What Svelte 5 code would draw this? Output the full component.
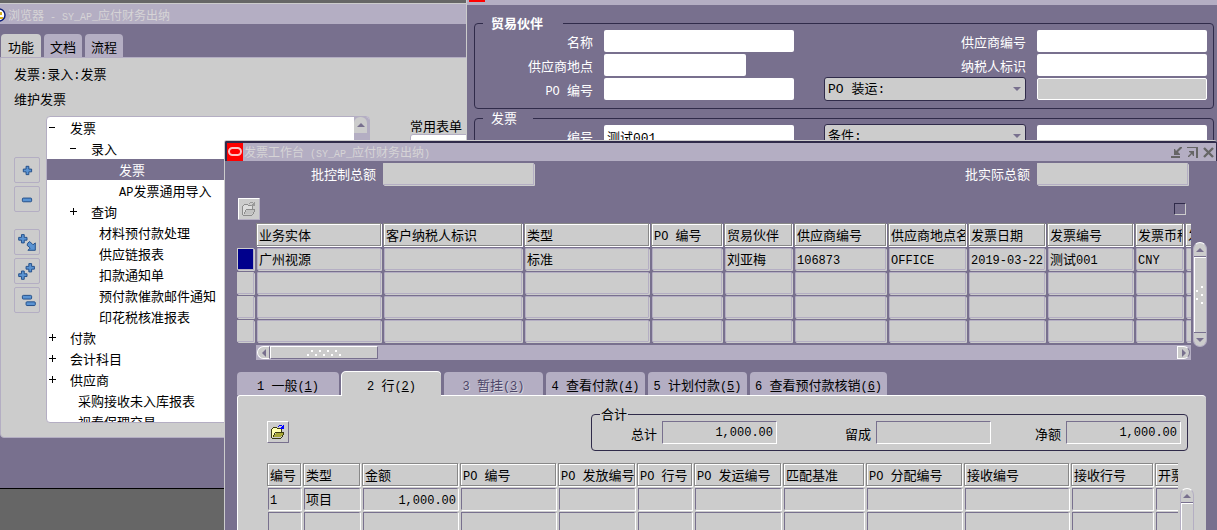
<script>
  const navTabs = ['功能', '文档', '流程'];

  const tree = [
    { level: 0, mark: '-', text: '发票' },
    { level: 1, mark: '-', text: '录入' },
    { level: 2, text: '发票', selected: true },
    { level: 2, text: 'AP发票通用导入' },
    { level: 1, mark: '+', text: '查询' },
    { level: 1, text: '材料预付款处理' },
    { level: 1, text: '供应链报表' },
    { level: 1, text: '扣款通知单' },
    { level: 1, text: '预付款催款邮件通知' },
    { level: 1, text: '印花税核准报表' },
    { level: 0, mark: '+', text: '付款' },
    { level: 0, mark: '+', text: '会计科目' },
    { level: 0, mark: '+', text: '供应商' },
    { level: 0, text: '采购接收未入库报表' },
    { level: 0, text: '视泰保理交易' }
  ];

  const tools = [
    { name: '展开', group: 0, plus: [[9, 9]], minus: [] },
    { name: '折叠', group: 0, plus: [], minus: [[8, 12]] },
    { name: '展开分支', group: 1, plus: [[4, 5]], minus: [], arrow: true },
    { name: '全部展开', group: 1, plus: [[12, 5], [4, 13]], minus: [] },
    { name: '全部折叠', group: 1, plus: [], minus: [[8, 8], [12, 15]] }
  ];

  const invoiceCols = [
    { w: 127, text: '业务实体' },
    { w: 141, text: '客户纳税人标识' },
    { w: 127, text: '类型' },
    { w: 73, text: 'PO 编号' },
    { w: 70, text: '贸易伙伴' },
    { w: 94, text: '供应商编号' },
    { w: 80, text: '供应商地点名' },
    { w: 79, text: '发票日期' },
    { w: 88, text: '发票编号' },
    { w: 50, text: '发票币种' },
    { w: 90, text: '发票金额' }
  ];
  const invoiceRows = [
    ['广州视源', '', '标准', '', '刘亚梅', '106873', 'OFFICE', '2019-03-22', '测试001', 'CNY', ''],
    Array(11).fill(''),
    Array(11).fill(''),
    Array(11).fill('')
  ];

  const workTabs = [
    { n: 1, text: '一般' },
    { n: 2, text: '行', active: true },
    { n: 3, text: '暂挂', off: true },
    { n: 4, text: '查看付款' },
    { n: 5, text: '计划付款' },
    { n: 6, text: '查看预付款核销' }
  ];

  const lineCols = [
    { w: 36, text: '编号' },
    { w: 59, text: '类型' },
    { w: 98, text: '金额', num: true },
    { w: 98, text: 'PO 编号' },
    { w: 79, text: 'PO 发放编号' },
    { w: 57, text: 'PO 行号' },
    { w: 89, text: 'PO 发运编号' },
    { w: 83, text: '匹配基准' },
    { w: 98, text: 'PO 分配编号' },
    { w: 107, text: '接收编号' },
    { w: 84, text: '接收行号' },
    { w: 90, text: '开票' }
  ];
  const lineRows = [
    ['1', '项目', '1,000.00', '', '', '', '', '', '', '', '', ''],
    Array(12).fill(''),
    Array(12).fill('')
  ];

  const totals = [
    { id: 'total', label: '总计', value: '1,000.00' },
    { id: 'retained', label: '留成', value: '' },
    { id: 'net', label: '净额', value: '1,000.00' }
  ];

  const runs = (s) => s.split(/([\x20-\x7e]+)/).filter(Boolean);
  const isLatin = (s) => /^[\x20-\x7e]+$/.test(s);
</script>

{#snippet mixed(s)}{#each runs(s) as part}{#if isLatin(part)}<span class="lat">{part}</span>{:else}{part}{/if}{/each}{/snippet}

{#snippet tri(dir)}
  <svg class="tri" viewBox="0 0 8 8" width="8" height="8" aria-hidden="true">
    {#if dir === 'up'}<path d="M0 6h8L4 2z" />{/if}
    {#if dir === 'down'}<path d="M0 2h8L4 6z" />{/if}
    {#if dir === 'left'}<path d="M6 0v8L2 4z" />{/if}
    {#if dir === 'right'}<path d="M2 0v8l4-4z" />{/if}
  </svg>
{/snippet}

{#snippet folder(off)}
  <svg class="folder" class:off viewBox="0 0 16 16" width="16" height="16" shape-rendering="crispEdges" aria-hidden="true">
    <path class="f-back" d="M2 13V5h1V4h4v1h4v3H5v1H4v2H3v2z" />
    <path class="f-front" d="M3 13l3-4h8l-3 4z" />
    <path class="f-line" d="M1 5h1v9H1zM2 4h1v1H2zM3 3h4v1H3zM7 4h4v1H7zM11 5h1v3h-1zM5 8h9v1H5zM4 9h1v2H4zM3 11h1v2H3zM2 14h9v-1h1v1h-1v1H2zM12 11h1v2h-1zM13 9h1v2h-1z" />
    <path class="f-arrow" d="M8 2h1V1h3v1h1V1h1v4h-4V4h1V3h1V2H9v1H8z" />
  </svg>
{/snippet}

{#snippet logo()}
  <svg class="logo" viewBox="0 0 16 18" width="16" height="18" aria-hidden="true">
    <rect width="16" height="18" fill="#f00" />
    <rect x="2" y="5" width="12" height="7" rx="3.5" fill="none" stroke="#fbc4c4" stroke-width="2" />
  </svg>
{/snippet}

{#snippet grid(cols, rows, lead)}
  <table style:width="{cols.reduce((a, c) => a + c.w, lead ? 19 : 0)}px">
    <colgroup>
      {#if lead}<col style:width="19px" />{/if}
      {#each cols as c}<col style:width="{c.w}px" />{/each}
    </colgroup>
    <thead>
      <tr>
        {#if lead}<td></td>{/if}
        {#each cols as c}<th scope="col"><div class="head">{@render mixed(c.text)}</div></th>{/each}
      </tr>
    </thead>
    <tbody>
      {#each rows as row, r}
        <tr>
          {#if lead}<td><div class="cell mark" class:current={r === 0}></div></td>{/if}
          {#each row as value, i}
            <td><div class="cell" class:num={cols[i].num}>{@render mixed(value)}</div></td>
          {/each}
        </tr>
      {/each}
    </tbody>
  </table>
{/snippet}

<main class="desktop">
  <section class="win navigator">
    <header class="title nav-title">
      <svg class="globe" viewBox="0 0 7 14" width="7" height="14" aria-hidden="true">
        <circle cx="-1" cy="7" r="6" fill="#fff" stroke="#0a1a78" stroke-width="1.5" />
        <path d="M0 4h2v3H0zM0 9h3v2H0z" fill="#d8b020" />
      </svg>
      <h2>{@render mixed('浏览器 - SY_AP_应付财务出纳')}</h2>
    </header>
    <nav class="nav-tabs">
      {#each navTabs as t, i}<button class:active={i === 0}>{t}</button>{/each}
    </nav>
    <div class="nav-panel">
      <p>{@render mixed('发票:录入:发票')}</p>
      <p>维护发票</p>
      <div class="nav-body">
        <div class="tools">
          {#each tools as t, i}
            <button aria-label={t.name} class:apart={i > 0 && tools[i - 1].group !== t.group}>
              <svg viewBox="0 0 26 26" width="24" height="24" aria-hidden="true">
                {#each t.plus as [x, y]}
                  <path d="M{x + 3} {y}h3v3h3v3h-3v3h-3v-3h-3v-3h3z" />
                {/each}
                {#each t.minus as [x, y]}
                  <rect {x} {y} width="10" height="4" rx="1" />
                {/each}
                {#if t.arrow}<path d="M14 14l2-1.500 3.500 3.500 2.500-2v8h-8l2.500-2.500-3.500-3z" />{/if}
              </svg>
            </button>
          {/each}
        </div>
        <div class="tree-box">
          <ul role="tree" aria-label="功能">
            {#each tree as n}
              <li role="treeitem" aria-selected={!!n.selected} class="l{n.level}" class:leaf={!n.mark} class:selected={n.selected}>
                {#if n.mark}<button class="toggle" aria-label={n.mark === '+' ? '展开' : '折叠'}><svg viewBox="0 0 7 7" width="7" height="7" shape-rendering="crispEdges" aria-hidden="true"><path d={n.mark === '+' ? 'M0 3h7v1H0zM3 0h1v7H3z' : 'M0 3h6v1H0z'} /></svg></button>{/if}
                <span>{@render mixed(n.text)}</span>
              </li>
            {/each}
          </ul>
          <div class="tree-scroll"><button aria-label="向上滚动">{@render tri('up')}</button></div>
        </div>
        <div class="favorites">
          <h3>常用表单</h3>
          <div class="fav-list"></div>
        </div>
      </div>
    </div>
  </section>

  <section class="win finder">
    <header class="title find-title">{@render logo()}<h2>查找发票</h2></header>
    <form class="find-body">
      <fieldset class="box">
        <legend class="strong">贸易伙伴</legend>
        <div class="form">
          <label for="p-name">名称</label><input id="p-name" />
          <label for="p-no">供应商编号</label><input id="p-no" class="wide" />
          <label for="p-site">供应商地点</label><input id="p-site" class="short" />
          <label for="p-tax">纳税人标识</label><input id="p-tax" class="wide" />
          <label for="p-po">{@render mixed('PO 编号')}</label><input id="p-po" />
          <div class="pick">
            <select aria-label="PO 装运"><option>PO 装运:</option></select>{@render tri('down')}
          </div>
          <input class="wide dim" aria-label="PO 装运" />
        </div>
      </fieldset>
      <fieldset class="box">
        <legend>发票</legend>
        <div class="form">
          <label for="i-no">编号</label><input id="i-no" value="测试001" />
          <div class="pick">
            <select aria-label="条件"><option>条件:</option></select>{@render tri('down')}
          </div>
          <input class="wide" aria-label="条件" />
        </div>
      </fieldset>
    </form>
  </section>

  <section class="win workbench">
    <header class="title work-title">
      {@render logo()}
      <h2>{@render mixed('发票工作台 (SY_AP_应付财务出纳)')}</h2>
      <div class="controls">
        <button aria-label="最小化"><svg viewBox="0 0 11 11" width="11" height="11"><path d="M0 9h9v2H0zM3 8V2h1l1 2 4-4h2v1L7 5l2 2v1z" /></svg></button>
        <button aria-label="最大化"><svg viewBox="0 0 11 11" width="11" height="11"><path d="M0 0h11v11h-2V1H0zM2 4h5v5H6L5 7l-3 3H1V9l3-3-2-1z" /></svg></button>
        <button aria-label="关闭"><svg viewBox="0 0 11 11" width="11" height="11"><path d="M1 1l9 9M10 1l-9 9" fill="none" stroke="#666" stroke-width="2.400" /></svg></button>
      </div>
    </header>
    <div class="work-body">
      <div class="batch">
        <label for="b-control">批控制总额</label><input id="b-control" class="sunk" />
        <label class="push" for="b-actual">批实际总额</label><input id="b-actual" class="sunk" />
      </div>
      <div class="bar">
        <button class="square flat" aria-label="打开发票">{@render folder(true)}</button>
        <input type="checkbox" aria-label="选择" />
      </div>
      <div class="invoices">
        <div class="clip">
          {@render grid(invoiceCols, invoiceRows, true)}
          <div class="hscroll">
            <button aria-label="向左滚动">{@render tri('left')}</button>
            <div class="thumb">
              <svg viewBox="0 0 36 10" width="36" height="10" fill="#fff" shape-rendering="crispEdges" aria-hidden="true">
                {#each [0, 1, 2, 3] as k}
                  <rect x={k * 8 + 1} y="6" width="2" height="2" /><rect x={k * 8 + 5} y="2" width="2" height="2" />
                {/each}
                <rect x="33" y="6" width="2" height="2" />
              </svg>
            </div>
            <button class="end" aria-label="向右滚动">{@render tri('right')}</button>
          </div>
        </div>
        <div class="vscroll">
          <button aria-label="向上滚动">{@render tri('up')}</button>
          <div class="rail">
            <svg viewBox="0 0 10 20" width="10" height="20" fill="#fff" shape-rendering="crispEdges" aria-hidden="true">
              <rect x="6" y="1" width="2" height="2" /><rect x="1" y="5" width="2" height="2" /><rect x="6" y="9" width="2" height="2" />
              <rect x="1" y="13" width="2" height="2" /><rect x="6" y="17" width="2" height="2" />
            </svg>
          </div>
          <button aria-label="向下滚动">{@render tri('down')}</button>
        </div>
      </div>
      <nav class="work-tabs">
        {#each workTabs as t}
          <button class:active={t.active} class:off={t.off}><span class="lat">{`${t.n} `}</span>{t.text}<span class="lat">(<u>{t.n}</u>)</span></button>
        {/each}
      </nav>
      <div class="work-panel">
        <div class="summary">
          <button class="square" aria-label="打开行">{@render folder(false)}</button>
          <fieldset class="box totals">
            <legend>合计</legend>
            <div class="sums">
              {#each totals as t}
                <div class="sum"><label for={t.id}>{t.label}</label><input id={t.id} value={t.value} /></div>
              {/each}
            </div>
          </fieldset>
        </div>
        <div class="lines">
          <div class="clip">{@render grid(lineCols, lineRows, false)}</div>
          <div class="vscroll">
            <button aria-label="向上滚动">{@render tri('up')}</button>
            <div class="rail"></div>
          </div>
        </div>
      </div>
    </div>
  </section>
</main>

<style>
  :global(body) {
    margin: 0;
    background: #666;
  }
  .desktop {
    --purple: #78708e;
    --lav: #b4aec3;
    --grey: #ccc;
    --ink: #302b4a;
    position: relative;
    height: 100vh;
    overflow: hidden;
    background: #666;
    font: 13px/16px 'Noto Sans CJK SC', 'Noto Sans', sans-serif;
    color: #000;
    white-space: nowrap;
  }
  .desktop * {
    box-sizing: border-box;
  }
  .lat {
    font-family: 'Liberation Mono', monospace;
    font-size: 12px;
    line-height: 1;
    white-space: pre;
  }
  h2, h3, p, ul {
    margin: 0;
    padding: 0;
    font-size: 13px;
    font-weight: 400;
    list-style: none;
  }
  button, input, select {
    margin: 0;
    padding: 0;
    border: 0;
    font: inherit;
    color: inherit;
    background: none;
  }
  svg {
    display: block;
    flex: none;
  }
  .tri {
    fill: var(--purple);
  }

  .win {
    position: absolute;
    background: var(--purple);
  }
  .title {
    display: flex;
    align-items: center;
    background: var(--lav);
    color: #d6d4d6;
  }
  .title h2 {
    font-size: 12px;
  }
  .title .lat {
    font-size: 10px;
  }

  .navigator {
    top: 3px;
    left: 0;
    width: 480px;
    border-top: 1px solid var(--grey);
    border-bottom: 1px solid #000;
    padding-bottom: 50px;
  }
  .nav-title {
    height: 20px;
    gap: 1px;
    padding-top: 2px;
  }
  .nav-tabs {
    display: flex;
    gap: 3px;
    padding: 10px 1px 0;
  }
  .nav-tabs button {
    height: 23px;
    padding: 2px 6px 0;
    background: var(--lav);
    border-radius: 4px 4px 0 0;
  }
  .nav-tabs .active {
    padding: 2px 7px 0;
    background: var(--grey);
  }
  .nav-panel {
    background: var(--grey);
    border: 1px solid var(--lav);
    border-radius: 0 0 0 4px;
    padding: 8px 0 14px 13px;
  }
  .nav-panel p {
    height: 25px;
  }
  .nav-body {
    display: flex;
  }
  .tools {
    display: flex;
    flex-direction: column;
    gap: 3px;
    padding-top: 41px;
    width: 32px;
  }
  .tools button {
    display: grid;
    place-items: center;
    width: 26px;
    height: 26px;
    border: 1px solid var(--lav);
    border-radius: 2px;
  }
  .tools .apart {
    margin-top: 14px;
  }
  .tools svg {
    fill: #5a93d2;
    stroke: #1d4a86;
    stroke-width: 1;
  }
  .tree-box {
    display: flex;
    width: 324px;
    height: 307px;
    overflow: hidden;
    background: #fff;
    border: 1px solid var(--lav);
    border-radius: 4px;
  }
  .tree-box ul {
    flex: 1;
  }
  .tree-box li {
    display: flex;
    align-items: center;
    height: 21px;
    gap: 14px;
  }
  .l0 { padding-left: 2px; }
  .l1 { padding-left: 23px; }
  .l2 { padding-left: 44px; }
  .leaf.l0 { padding-left: 31px; }
  .leaf.l1 { padding-left: 52px; }
  .leaf.l2 { padding-left: 72px; }
  .selected {
    background: var(--purple);
    color: #fff;
  }
  .tree-scroll {
    width: 15px;
    background: var(--lav);
  }
  .tree-scroll button {
    display: grid;
    place-items: center;
    width: 13px;
    height: 16px;
    background: var(--grey);
    border-radius: 6px 6px 0 0;
  }
  .favorites {
    flex: 1;
    padding: 2px 0 0 40px;
  }
  .fav-list {
    height: 286px;
    background: #fff;
    border: 1px solid var(--lav);
    border-radius: 3px 0 0 3px;
  }

  .finder {
    top: 0;
    left: 466px;
    right: 0;
    border-left: 1px solid var(--grey);
  }
  .find-title {
    height: 5px;
    align-items: flex-end;
    overflow: hidden;
    gap: 3px;
    padding: 0 0 2px 2px;
    border-bottom: 1px solid var(--lav);
  }
  .find-body {
    padding: 11px 3px 0 7px;
  }
  .box {
    min-width: 0;
    margin: 0;
    padding: 0;
    border: 1px solid var(--ink);
    border-radius: 4px;
  }
  .finder .box {
    color: #fff;
    margin-bottom: 2px;
  }
  legend {
    height: 14px;
    line-height: 14px;
    padding: 0 16px 0 8px;
    margin-left: 8px;
  }
  .strong {
    padding-right: 20px;
    font-weight: 700;
  }
  .form {
    display: grid;
    grid-template-columns: 118px 190px 221px 1fr;
    grid-auto-rows: 22px;
    gap: 2px 11px;
    align-items: center;
    padding: 0 6px 8px 0;
  }
  .form label {
    text-align: right;
    padding-top: 2px;
  }
  .form input {
    width: 100%;
    height: 22px;
    padding: 0 3px;
    color: #000;
    background: #fff;
    border-radius: 2px;
    font-family: 'Liberation Mono', 'Noto Sans CJK SC', monospace;
  }
  .form .short {
    width: 142px;
  }
  .form .dim {
    background: var(--grey);
    border: 1px solid #fff;
  }
  .pick {
    display: flex;
    align-items: center;
    justify-content: flex-end;
    width: 202px;
    height: 24px;
    margin-left: auto;
    padding-right: 4px;
    color: #000;
    background: var(--grey);
    border: 1px solid var(--ink);
    border-radius: 3px;
  }
  .pick select {
    flex: 1;
    height: 22px;
    padding: 2px 0 0 3px;
    appearance: none;
    font-family: 'Liberation Mono', 'Noto Sans CJK SC', monospace;
  }

  .workbench {
    top: 140px;
    left: 224px;
    right: 0;
    bottom: 0;
    overflow: hidden;
    border-top: 1px solid var(--grey);
    border-left: 1px solid var(--grey);
    border-radius: 3px 3px 0 0;
  }
  .work-title {
    height: 20px;
    border: solid var(--ink);
    border-width: 2px 1px 0 2px;
    gap: 1px;
  }
  .controls {
    display: flex;
    gap: 5px;
    margin-left: auto;
    padding-right: 2px;
  }
  .controls svg {
    fill: #666;
  }
  .work-body {
    padding: 2px 11px 0 12px;
  }
  .batch {
    display: flex;
    align-items: center;
    gap: 7px;
    padding: 0 18px 0 74px;
    color: #fff;
  }
  .push {
    margin-left: auto;
  }
  .sunk {
    width: 151px;
    height: 22px;
    color: #000;
    background: var(--grey);
    border: 1px solid;
    border-color: var(--grey) var(--lav) var(--lav) var(--grey);
    border-radius: 1px;
    box-shadow: 1px 1px var(--grey);
  }
  .bar {
    display: flex;
    align-items: center;
    justify-content: space-between;
    padding: 13px 20px 3px 1px;
  }
  .square {
    display: grid;
    place-items: center;
    width: 22px;
    height: 22px;
    background: var(--grey);
    border: 1px solid;
    border-color: #fff var(--purple) var(--purple) #fff;
    border-radius: 1px;
  }
  .flat {
    border-color: #fff var(--lav) var(--lav) #fff;
  }
  .folder .f-back { fill: #ffffb0; }
  .folder .f-front { fill: #a8a838; }
  .folder .f-line { fill: #3c3c10; }
  .folder .f-arrow { fill: #00f; }
  .folder.off .f-back { fill: #ddd; }
  .folder.off .f-front { fill: #c2c2c2; }
  .folder.off .f-line { fill: #8c8c8c; }
  .folder.off .f-arrow { fill: #999; }
  .bar input {
    appearance: none;
    width: 12px;
    height: 12px;
    border: 1px solid;
    border-color: var(--ink) var(--grey) var(--grey) var(--ink);
  }

  .invoices {
    display: flex;
    gap: 2px;
    margin-right: -1px;
  }
  .clip {
    flex: 1;
    min-width: 0;
    overflow: hidden;
  }
  table {
    table-layout: fixed;
    border-spacing: 0;
  }
  th, td {
    padding: 0;
    font-weight: 400;
    text-align: left;
  }
  .head {
    height: 23px;
    margin: 0 2px 2px 0;
    padding-left: 2px;
    line-height: 21px;
    overflow: hidden;
    background: var(--grey);
    border: 1px solid #888;
    box-shadow: inset 1px 1px #fff, 1px 1px #fff;
  }
  .cell {
    height: 22px;
    margin: 0 2px 2px 1px;
    padding: 0 2px 0 1px;
    line-height: 20px;
    overflow: hidden;
    background: var(--grey);
    border: 1px solid var(--lav);
    border-radius: 1px;
    box-shadow: 1px 1px var(--grey);
  }
  .num {
    text-align: right;
    padding-right: 1px;
  }
  .mark {
    margin-left: 0;
    border-color: var(--grey) var(--lav) var(--lav) var(--grey);
  }
  .current {
    background: #00008c;
  }
  .lines .cell {
    border-color: var(--purple) var(--grey) var(--grey) var(--purple);
    box-shadow: 1px 1px #fff;
    border-radius: 0;
  }
  .hscroll {
    display: flex;
    height: 15px;
    margin: 1px 0 0 19px;
    padding: 1px;
    background: var(--lav);
  }
  .hscroll button {
    display: grid;
    place-items: center;
    width: 13px;
    background: var(--grey);
    border: 1px solid #fff;
    border-right-color: var(--purple);
    border-radius: 7px 0 0 7px;
  }
  .hscroll .end {
    margin-left: auto;
    border-radius: 0 7px 7px 0;
  }
  .thumb {
    display: grid;
    place-items: center;
    width: 108px;
    background: var(--grey);
    border: 1px solid;
    border-color: #fff var(--purple) var(--purple) #fff;
  }
  .vscroll {
    display: flex;
    flex-direction: column;
    width: 14px;
    margin: 19px 0 13px;
    background: var(--grey);
    border: 1px solid var(--lav);
    border-top-color: #fff;
    border-radius: 7px;
  }
  .vscroll button {
    display: grid;
    place-items: center;
    height: 13px;
  }
  .rail {
    display: grid;
    flex: 1;
    place-items: center;
    border: solid var(--purple);
    border-width: 1px 0;
    box-shadow: inset 1px 1px #fff;
  }

  .work-tabs {
    display: flex;
    gap: 3px;
    padding-top: 12px;
  }
  .work-tabs button {
    min-width: 99px;
    height: 23px;
    padding: 3px 5px 0;
    background: var(--lav);
    border-radius: 4px 4px 0 0;
  }
  .work-tabs button:first-child {
    min-width: 102px;
  }
  .work-tabs .active {
    background: var(--grey);
    box-shadow: 0 -1px #fff, -1px 0 #fff, 0 1px var(--grey);
    z-index: 1;
  }
  .work-tabs .off {
    color: #4c4668;
    text-shadow: 1px 1px #d4d2dc;
  }
  .work-panel {
    padding: 11px 12px 0 29px;
    background: var(--grey);
    border: solid #fff;
    border-width: 1px 0 0 1px;
    border-radius: 3px 4px 0 0;
  }
  .summary {
    display: flex;
    gap: 302px;
    padding-right: 6px;
  }
  .summary .square {
    margin-top: 14px;
  }
  .totals {
    flex: 1;
  }
  .totals legend {
    padding: 0 1px;
  }
  .sums {
    display: flex;
    padding: 0 6px 6px 39px;
  }
  .sum {
    display: flex;
    align-items: center;
    gap: 5px;
  }
  .sum:nth-child(2) {
    margin-left: 68px;
  }
  .sum:last-child {
    margin-left: auto;
  }
  .sum label {
    padding-top: 3px;
  }
  .sum input {
    width: 115px;
    height: 23px;
    padding: 0 3px;
    text-align: right;
    font-family: 'Liberation Mono', monospace;
    font-size: 12px;
    border: 1px solid;
    border-color: var(--purple) #fff #fff var(--purple);
  }
  .lines {
    display: flex;
    gap: 2px;
    padding-top: 12px;
  }
  .lines .vscroll {
    margin: 25px 0 0;
  }
</style>
